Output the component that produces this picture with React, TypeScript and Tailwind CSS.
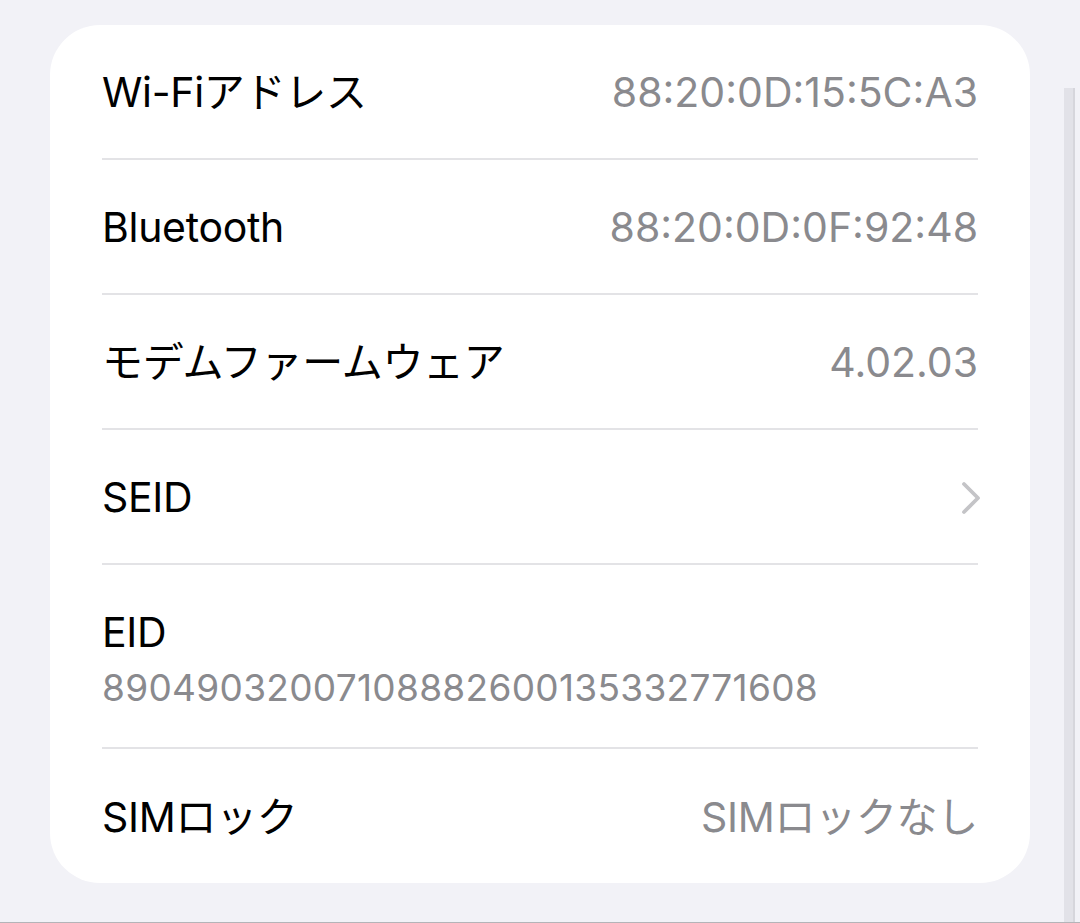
const font = { fontFamily: 'Inter, "Noto Sans CJK JP", sans-serif' };

type Row = { label: string; value?: string; chevron?: boolean };

const rows: Row[] = [
  { label: "Wi-Fiアドレス", value: "88:20:0D:15:5C:A3" },
  { label: "Bluetooth", value: "88:20:0D:0F:92:48" },
  { label: "モデムファームウェア", value: "4.02.03" },
  { label: "SEID", chevron: true },
];

const Chevron = () => (
  <svg width="20" height="34" viewBox="0 0 20 34" fill="none">
    <path d="M3 3 L17 17 L3 31" stroke="#c4c4c7" strokeWidth="3.8" strokeLinecap="round" strokeLinejoin="round" />
  </svg>
);

const Separator = () => <div className="h-[2px] bg-[#e3e3e6]" />;

export default function App() {
  return (
    <div className="w-[1080px] h-[923px] bg-[#f2f2f7] flex flex-col overflow-hidden" style={font}>
      <div className="flex flex-1">
        <div className="pl-[50px] pt-[25px]">
          <div className="w-[980px] h-[858px] bg-white rounded-[50px] px-[52px] flex flex-col">
            {rows.map((r) => (
              <div key={r.label} className="flex flex-col">
                <div className="h-[133px] pt-[3px] flex items-center justify-between">
                  <span className="text-[41px] text-black tracking-[-0.3px]">{r.label}</span>
                  {r.value && <span className="text-[41px] text-[#8a8a8e]">{r.value}</span>}
                  {r.chevron && (
                    <span className="mr-[-3px]">
                      <Chevron />
                    </span>
                  )}
                </div>
                <Separator />
              </div>
            ))}
            <div className="h-[182px] flex flex-col justify-center gap-[10px] pt-[6px]">
              <span className="text-[41px] text-black leading-[48px] tracking-[-0.3px]">EID</span>
              <span className="text-[37px] text-[#8a8a8e] leading-[44px] tracking-[0.3px]">89049032007108882600135332771608</span>
            </div>
            <Separator />
            <div className="flex-1 pt-[3px] flex items-center justify-between">
              <span className="text-[41px] text-black tracking-[-0.3px]">SIMロック</span>
              <span className="text-[41px] text-[#8a8a8e] tracking-[-0.3px]">SIMロックなし</span>
            </div>
          </div>
        </div>
        <div className="flex-1 flex pl-[34px] pt-[88px]">
          <div className="w-[11px] bg-[#e2e2e8] border-r-[2px] border-[#d6d6dc]" />
        </div>
      </div>
      <div className="h-px bg-[#b4b4b8]" />
    </div>
  );
}
